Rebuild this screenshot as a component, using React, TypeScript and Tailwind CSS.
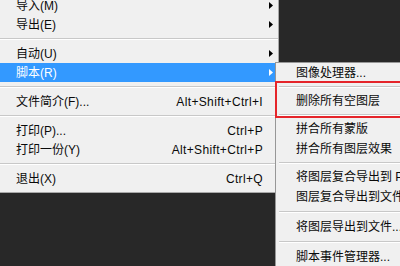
import React from "react";

type Item =
  | { sep: true; tall?: boolean }
  | { sep?: false; label: string; shortcut?: string; arrow?: boolean; active?: boolean };

const mainItems: Item[] = [
  { label: "导入(M)", arrow: true },
  { label: "导出(E)", arrow: true },
  { sep: true },
  { label: "自动(U)", arrow: true },
  { label: "脚本(R)", arrow: true, active: true },
  { sep: true },
  { label: "文件简介(F)...", shortcut: "Alt+Shift+Ctrl+I" },
  { sep: true },
  { label: "打印(P)...", shortcut: "Ctrl+P" },
  { label: "打印一份(Y)", shortcut: "Alt+Shift+Ctrl+P" },
  { sep: true },
  { label: "退出(X)", shortcut: "Ctrl+Q" },
];

const subItems: Item[] = [
  { label: "图像处理器..." },
  { sep: true },
  { label: "删除所有空图层" },
  { sep: true },
  { label: "拼合所有蒙版" },
  { label: "拼合所有图层效果" },
  { sep: true },
  { label: "将图层复合导出到 PDF..." },
  { label: "图层复合导出到文件..." },
  { sep: true, tall: true },
  { label: "将图层导出到文件..." },
  { sep: true, tall: true },
  { label: "脚本事件管理器..." },
];

const font = {
  fontFamily: '"Liberation Sans", "Noto Sans CJK SC", sans-serif',
};

function Arrow({ white }: { white?: boolean }) {
  return (
    <svg width="4" height="7" viewBox="0 0 4 7">
      <path d="M0 0L4 3.5L0 7Z" fill={white ? "#ffffff" : "#000000"} />
    </svg>
  );
}

export default function App() {
  return (
    <div
      className="relative w-[400px] h-[266px] overflow-hidden bg-[#282828] text-[12px] text-[#0a0a0a]"
      style={font}
    >
      {/* main menu */}
      <div className="w-[279px] -mt-[4px] bg-[#f0f0f0] border-r border-b border-[#a8a8a8] pb-[4px]">
        {mainItems.map((it, i) =>
          it.sep ? (
            <div key={i} className="h-[10px] flex items-center">
              <div className="w-full h-[2px] border-t border-[#c8c8c8] border-b border-b-white" />
            </div>
          ) : (
            <div
              key={i}
              className={
                "h-[19px] flex items-center pl-[16px] " +
                (it.active ? "bg-[#3399ff] text-white" : "")
              }
            >
              <span className="flex-1 whitespace-nowrap">{it.label}</span>
              {it.shortcut && (
                <span className="whitespace-nowrap tracking-[0.35px]">{it.shortcut}</span>
              )}
              <span className="w-[15px] flex justify-center">
                {it.arrow && <Arrow white={it.active} />}
              </span>
            </div>
          )
        )}
      </div>

      {/* submenu */}
      <div className="absolute left-[275px] top-[62px] w-[140px] h-[220px] bg-[#f0f0f0] border-l border-t border-[#979797]">
        {subItems.map((it, i) =>
          it.sep ? (
            <div
              key={i}
              className={(it.tall ? "h-[10px]" : "h-[8px]") + " flex items-center pl-[3px]"}
            >
              <div className="w-full h-[2px] border-t border-[#c8c8c8] border-b border-b-white" />
            </div>
          ) : (
            <div key={i} className="h-[20px] flex items-center pl-[20px]">
              <span className="whitespace-nowrap">{it.label}</span>
            </div>
          )
        )}
      </div>

      {/* red annotation box */}
      <div className="absolute left-[275px] top-[81px] w-[140px] h-[37px] border-2 border-[#e5252a]" />
    </div>
  );
}
